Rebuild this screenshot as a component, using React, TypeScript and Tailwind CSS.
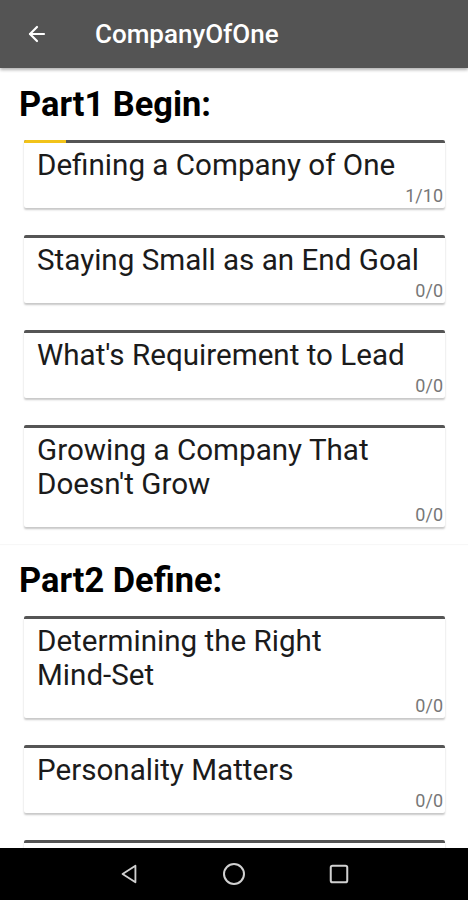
import { ArrowLeft } from "lucide-react";

type Chapter = { title: string; done: number; total: number };

const parts: { name: string; chapters: Chapter[] }[] = [
    {
        name: "Part1 Begin:",
        chapters: [
            { title: "Defining a Company of One", done: 1, total: 10 },
            { title: "Staying Small as an End Goal", done: 0, total: 0 },
            { title: "What's Requirement to Lead", done: 0, total: 0 },
            { title: "Growing a Company That Doesn't Grow", done: 0, total: 0 },
        ],
    },
    {
        name: "Part2 Define:",
        chapters: [
            { title: "Determining the Right Mind-Set", done: 0, total: 0 },
            { title: "Personality Matters", done: 0, total: 0 },
            { title: "Resilience and Autonomy", done: 0, total: 0 },
        ],
    },
];

// keep hyphenated words together so "Mind-Set" wraps as one word
function Title({ text }: { text: string }) {
    return (
        <>
            {text.split(" ").map((w, i) => (
                <span key={i} className={w.includes("-") ? "whitespace-nowrap" : ""}>
                    {i > 0 ? " " : ""}
                    {w}
                </span>
            ))}
        </>
    );
}

function ChapterCard({ chapter }: { chapter: Chapter }) {
    const pct = chapter.total > 0 ? (chapter.done / chapter.total) * 100 : 0;
    return (
        <div className="bg-white rounded-[2px] shadow-[0_2px_2px_rgba(0,0,0,0.22)] overflow-hidden">
            <div className="h-[3px] bg-[#555555]">
                <div className="h-full bg-[#f2c319]" style={{ width: `${pct}%` }} />
            </div>
            <div className="pl-[13px] pr-[2px] pt-[5px]">
                <p className="text-[29.6px] leading-[34px] text-[#1b1b1b] pr-[8px]">
                    <Title text={chapter.title} />
                </p>
                <p className="text-right text-[18px] leading-[20px] text-[#777777] mt-[4px] pb-[2px]">
                    {chapter.done}/{chapter.total}
                </p>
            </div>
        </div>
    );
}

export default function App() {
    return (
        <div
            className="w-[468px] h-[900px] bg-white flex flex-col overflow-hidden"
            style={{ fontFamily: "Roboto, 'Noto Sans', sans-serif" }}
        >
            <div className="h-[68px] shrink-0 bg-[#545454] flex items-center shadow-[0_2px_3px_rgba(0,0,0,0.3)] z-10">
                <ArrowLeft className="ml-[25px] text-white" size={24} strokeWidth={2.2} />
                <h1 className="ml-[46px] text-white text-[26px] font-medium">CompanyOfOne</h1>
            </div>

            <div className="flex-1 overflow-hidden">
                {parts.map((part) => (
                    <div
                        key={part.name}
                        className="pt-[16px] pb-[17px] shadow-[0_1px_1px_rgba(0,0,0,0.03)]"
                    >
                        <h2 className="ml-[19px] text-[34.4px] leading-[40px] font-bold text-black">
                            {part.name}
                        </h2>
                        <div className="mt-[16px] ml-[24px] mr-[23px] flex flex-col gap-[27px]">
                            {part.chapters.map((c) => (
                                <ChapterCard key={c.title} chapter={c} />
                            ))}
                        </div>
                    </div>
                ))}
            </div>

            <div className="h-[52px] shrink-0 bg-black flex items-center justify-center gap-[82px]">
                <svg width="22" height="22" viewBox="0 0 24 24" fill="none" stroke="#d0d0d0" strokeWidth="2" strokeLinejoin="round">
                    <path d="M19 3 L5 12 L19 21 Z" />
                </svg>
                <svg width="24" height="24" viewBox="0 0 24 24" fill="none" stroke="#d0d0d0" strokeWidth="2">
                    <circle cx="12" cy="12" r="10" />
                </svg>
                <svg width="22" height="22" viewBox="0 0 24 24" fill="none" stroke="#d0d0d0" strokeWidth="2.2">
                    <rect x="3" y="3" width="18" height="18" rx="2" />
                </svg>
            </div>
        </div>
    );
}
